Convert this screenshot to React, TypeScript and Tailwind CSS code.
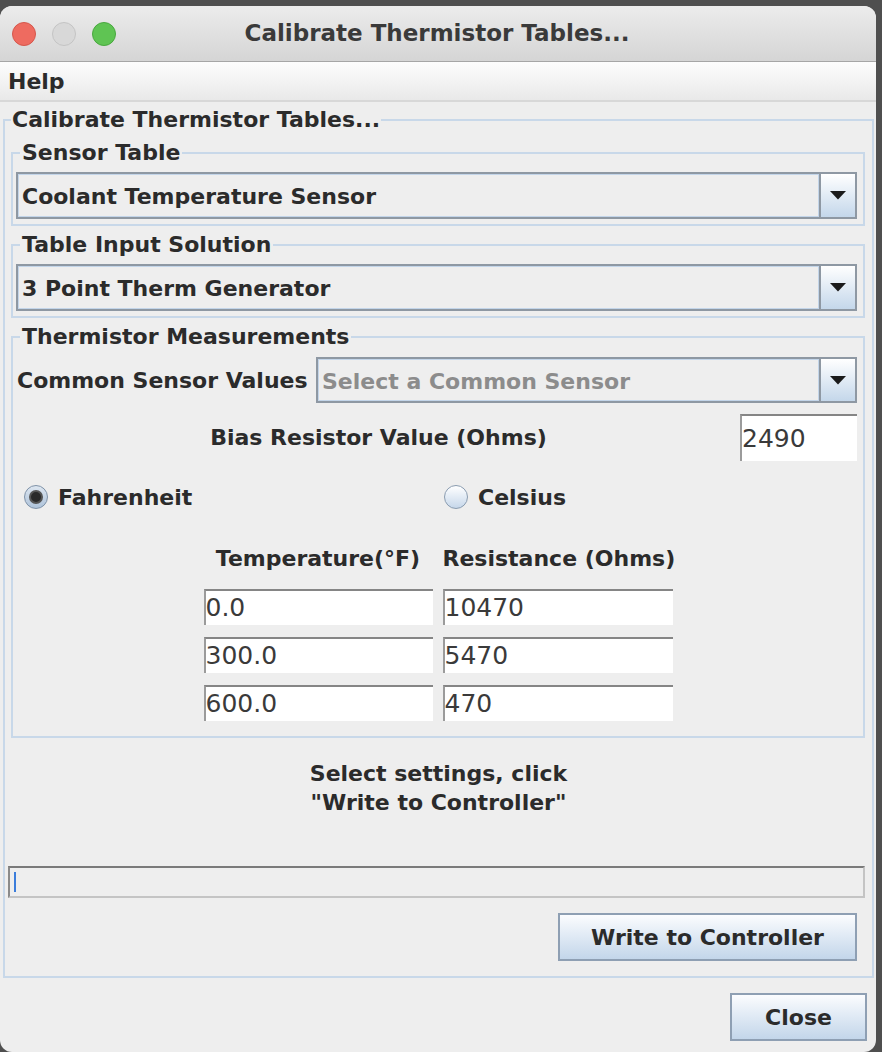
import React from "react";

const FONT = { fontFamily: '"DejaVu Sans", "Liberation Sans", sans-serif' };

function Arrow() {
  return (
    <svg width="16" height="9" viewBox="0 0 16 9">
      <polygon points="0,0 16,0 8,8.5" fill="#1b1b1b" />
    </svg>
  );
}

function Combo({ text, placeholder, className }: { text: string; placeholder?: boolean; className?: string }) {
  return (
    <div className={"flex border-2 border-[#8e98a3] bg-[#eeeeee] " + (className ?? "")}>
      <div
        className={
          "flex-1 flex items-center border border-[#c3d5e9] pl-[3px] pt-[2px] text-[22px] font-bold whitespace-nowrap " +
          (placeholder ? "text-[#8c8c8c]" : "text-[#2b2b2b]")
        }
      >
        {text}
      </div>
      <div className="w-[36px] border-l-2 border-[#8e98a3] bg-gradient-to-b from-[#ffffff] to-[#c4d7ea] flex items-center justify-center">
        <Arrow />
      </div>
    </div>
  );
}

function Field({ value, className }: { value: string; className?: string }) {
  return (
    <div
      className={
        "bg-white border-t-2 border-l-2 border-t-[#858585] border-l-[#9b9b9b] flex items-center text-[25px] text-[#3a3a3a] " +
        (className ?? "")
      }
    >
      {value}
    </div>
  );
}

function Radio({ checked, label }: { checked?: boolean; label: string }) {
  return (
    <div className="flex items-center pl-[7px] gap-[10px]">
      <div
        className={
          "w-[24px] h-[24px] rounded-full border flex items-center justify-center " +
          (checked
            ? "border-[#7f92a8] bg-gradient-to-b from-[#dde6f0] to-[#aec3da]"
            : "border-[#8a9cb0] bg-gradient-to-b from-[#ffffff] to-[#c6d7ea]")
        }
      >
        {checked && <div className="w-[14px] h-[14px] rounded-full bg-[#2a2a2a] border-2 border-[#555]" />}
      </div>
      <span className="text-[22px] font-bold text-[#2b2b2b]">{label}</span>
    </div>
  );
}

function Button({ label, className }: { label: string; className?: string }) {
  return (
    <div
      className={
        "h-[48px] border-2 border-[#8e9fb3] bg-gradient-to-b from-[#fbfcfe] to-[#c3d6ea] flex items-center justify-center text-[22px] font-bold text-[#2b2b2b] " +
        (className ?? "")
      }
    >
      {label}
    </div>
  );
}

export default function App() {
  return (
    <div className="w-[882px] h-[1052px] bg-[#4f4f4f] pt-[6px] overflow-hidden" style={FONT}>
      <div className="w-[876px] h-[1046px] rounded-[12px] overflow-hidden bg-[#eeeeee] flex flex-col">
        {/* title bar */}
        <div className="h-[56px] shrink-0 bg-gradient-to-b from-[#ececec] to-[#d5d5d5] border-b border-[#a6a6a6] grid grid-cols-[1fr_auto_1fr] items-center">
          <div className="flex items-center gap-[16px] pl-[12px]">
            <div className="w-[24px] h-[24px] rounded-full bg-[#ee6b60] border border-[#d5574c]" />
            <div className="w-[24px] h-[24px] rounded-full bg-[#d8d8d8] border border-[#c4c4c4]" />
            <div className="w-[24px] h-[24px] rounded-full bg-[#5fc453] border border-[#49a83f]" />
          </div>
          <div className="text-[23px] font-bold text-[#3a3a3a] pr-[2px]">Calibrate Thermistor Tables...</div>
          <div />
        </div>

        {/* menu bar */}
        <div className="h-[40px] shrink-0 bg-gradient-to-b from-[#fdfdfd] to-[#e9e9e9] border-b-2 border-[#d8d8d8] flex items-center pl-[8px]">
          <span className="text-[22px] font-bold text-[#2b2b2b]">Help</span>
        </div>

        {/* content */}
        <div className="pl-[3px] pr-[2px] pt-[5px] text-[#2b2b2b]">
          <fieldset className="border-2 border-[#c8d8e9] pb-[15px]">
            <legend className="ml-[6px] px-[1px] leading-[26px] text-[22px] font-bold">Calibrate Thermistor Tables...</legend>

            <fieldset className="mt-[7px] ml-[6px] mr-[7px] border-2 border-[#c8d8e9] pt-[6px] pb-[5px]">
              <legend className="ml-[7px] px-[2px] leading-[26px] text-[22px] font-bold">Sensor Table</legend>
              <Combo text="Coolant Temperature Sensor" className="h-[47px] ml-[3px] mr-[6px]" />
            </fieldset>

            <fieldset className="mt-[6px] ml-[6px] mr-[7px] border-2 border-[#c8d8e9] pt-[6px] pb-[5px]">
              <legend className="ml-[7px] px-[2px] leading-[26px] text-[22px] font-bold">Table Input Solution</legend>
              <Combo text="3 Point Therm Generator" className="h-[47px] ml-[3px] mr-[6px]" />
            </fieldset>

            <fieldset className="mt-[6px] ml-[6px] mr-[7px] border-2 border-[#c8d8e9] pt-[7px] pb-[15px]">
              <legend className="ml-[7px] px-[2px] leading-[26px] text-[22px] font-bold">Thermistor Measurements</legend>
              <div className="flex items-center ml-[4px] mr-[6px] h-[46px]">
                <span className="flex-1 text-[22px] font-bold whitespace-nowrap">Common Sensor Values</span>
                <Combo text="Select a Common Sensor" placeholder className="w-[541px] h-[46px]" />
              </div>
              <div className="flex items-center ml-[4px] mr-[6px] mt-[11px] h-[47px]">
                <div className="flex-1 text-center text-[22px] font-bold">Bias Resistor Value (Ohms)</div>
                <Field value="2490" className="w-[117px] h-[47px]" />
              </div>
              <div className="grid grid-cols-2 ml-[4px] mr-[6px] mt-[18px] h-[36px] items-center">
                <Radio checked label="Fahrenheit" />
                <Radio label="Celsius" />
              </div>
              <div className="mx-auto mt-[31px] w-[469px] grid grid-cols-[229px_230px] gap-x-[10px]">
                <div className="text-center leading-[26px] text-[22px] font-bold whitespace-nowrap">Temperature(°F)</div>
                <div className="text-center leading-[26px] text-[22px] font-bold whitespace-nowrap">Resistance (Ohms)</div>
              </div>
              <div className="mx-auto mt-[17px] w-[469px] grid grid-cols-[229px_230px] gap-x-[10px] gap-y-[12px]">
                <Field value="0.0" className="h-[36px]" />
                <Field value="10470" className="h-[36px]" />
                <Field value="300.0" className="h-[36px]" />
                <Field value="5470" className="h-[36px]" />
                <Field value="600.0" className="h-[36px]" />
                <Field value="470" className="h-[36px]" />
              </div>
            </fieldset>

            <div className="mt-[21px] text-center leading-[29px] text-[22px] font-bold">
              <div>Select settings, click</div>
              <div>"Write to Controller"</div>
            </div>

            <div className="mt-[49px] ml-[3px] mr-[7px] h-[32px] border-2 border-t-[#7a7a7a] border-l-[#8a8a8a] border-r-[#c4c4c4] border-b-[#c4c4c4] bg-[#eeeeee] flex items-center pl-[4px]">
              <div className="w-[2px] h-[20px] bg-[#3b7ddb]" />
            </div>

            <div className="mt-[15px] flex justify-end mr-[15px]">
              <Button label="Write to Controller" className="w-[299px]" />
            </div>
          </fieldset>
        </div>

        <div className="mt-[15px] flex justify-end mr-[9px]">
          <Button label="Close" className="w-[137px]" />
        </div>
      </div>
    </div>
  );
}
